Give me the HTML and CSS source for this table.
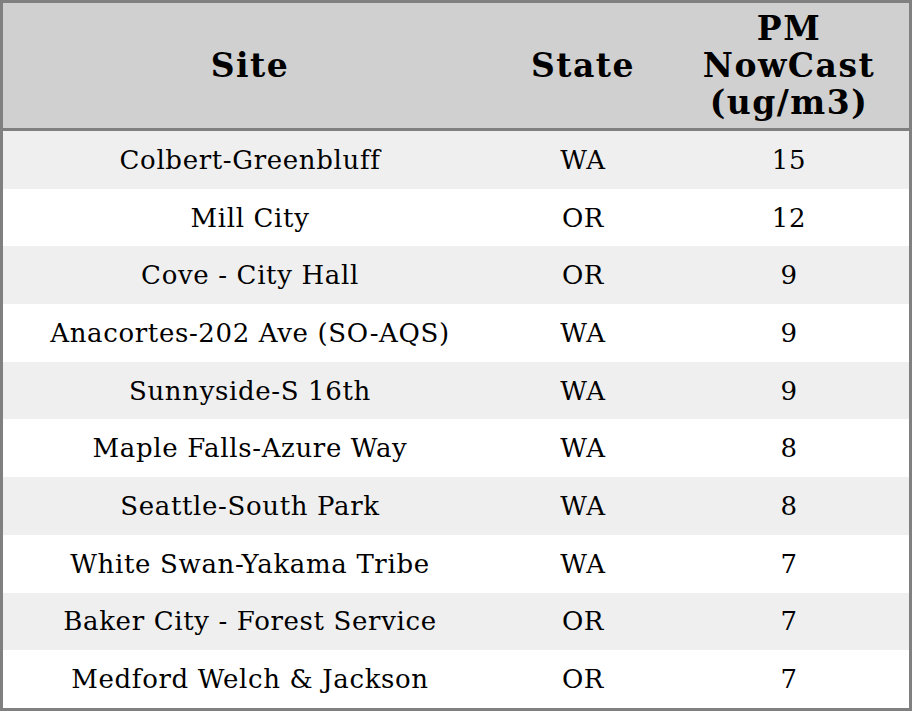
FILE: index.html
```html
<!DOCTYPE html>
<html>
<head>
<meta charset="utf-8">
<link rel="stylesheet" href="styles.css">
</head>
<body>
<table class="grid">
  <colgroup>
    <col class="c-site">
    <col class="c-state">
    <col class="c-pm">
  </colgroup>
  <thead>
    <tr><th>Site</th><th>State</th><th>PM<br>NowCast<br>(ug/m3)</th></tr>
  </thead>
  <tbody>
    <tr><td>Colbert-Greenbluff</td><td>WA</td><td>15</td></tr>
    <tr><td>Mill City</td><td>OR</td><td>12</td></tr>
    <tr><td>Cove - City Hall</td><td>OR</td><td>9</td></tr>
    <tr><td>Anacortes-202 Ave (SO-AQS)</td><td>WA</td><td>9</td></tr>
    <tr><td>Sunnyside-S 16th</td><td>WA</td><td>9</td></tr>
    <tr><td>Maple Falls-Azure Way</td><td>WA</td><td>8</td></tr>
    <tr><td>Seattle-South Park</td><td>WA</td><td>8</td></tr>
    <tr><td>White Swan-Yakama Tribe</td><td>WA</td><td>7</td></tr>
    <tr><td>Baker City - Forest Service</td><td>OR</td><td>7</td></tr>
    <tr><td>Medford Welch &amp; Jackson</td><td>OR</td><td>7</td></tr>
  </tbody>
</table>
</body>
</html>
```

FILE: styles.css
```css
html, body {
  margin: 0;
  padding: 0;
  background: #ffffff;
}
.grid {
  width: 912px;
  height: 711px;
  border: 3px solid #808080;
  border-collapse: separate;
  border-spacing: 0;
  table-layout: fixed;
  font-family: "DejaVu Serif", serif;
  color: #000;
}
.c-site { width: 494px; }
.c-state { width: 172px; }
.c-pm { width: 240px; }
.grid th {
  background: #d0d0d0;
  font-weight: bold;
  font-size: 33px;
  line-height: 37px;
  letter-spacing: 0.045em;
  height: 125px;
  padding: 0;
  border-bottom: 3px solid #808080;
  text-align: center;
  vertical-align: middle;
}
.grid td {
  font-size: 26px;
  letter-spacing: 0.025em;
  height: 57.7px;
  padding: 0;
  text-align: center;
  vertical-align: middle;
}
.grid tbody tr:nth-child(odd) td {
  background: #efefef;
}
```
